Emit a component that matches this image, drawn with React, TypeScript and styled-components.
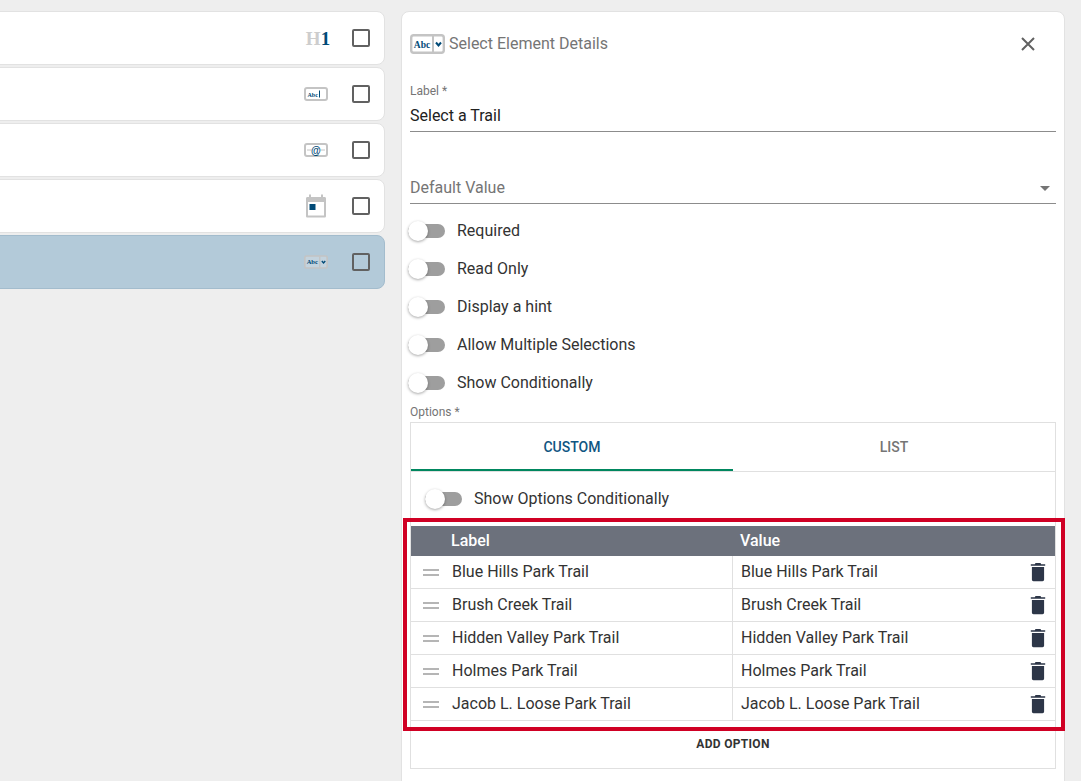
import React, { FC } from "react";
import styled, { createGlobalStyle } from "styled-components";

const GlobalStyle = createGlobalStyle`
  html, body {
    margin: 0;
    height: 781px;
    overflow: hidden;
    background: #eeeeee;
    font-family: Roboto, "Liberation Sans", sans-serif;
    color: #212121;
  }
  * { box-sizing: border-box; }
`;

const Page = styled.div`
  display: flex;
  align-items: flex-start;
  gap: 16px;
  height: 781px;
  padding-top: 11px;
  overflow: hidden;
`;

const ElementList = styled.div`
  display: flex;
  flex-direction: column;
  gap: 2px;
  width: 385px;
  flex: none;
`;

const ElementRow = styled.div<{ $active?: boolean }>`
  display: flex;
  align-items: center;
  justify-content: flex-end;
  height: 54px;
  margin-left: -12px;
  padding-right: 14px;
  border: 1px solid ${({ $active }) => ($active ? "#a3bccd" : "#e2e2e2")};
  border-radius: 8px;
  background: ${({ $active }) => ($active ? "#b3cad9" : "#fff")};
`;

const ElementIcon = styled.div`
  display: flex;
  align-items: center;
  justify-content: center;
  width: 26px;
  margin-right: 23px;
`;

const Checkbox = styled.span`
  width: 18px;
  height: 18px;
  border: 2px solid #616161;
  border-radius: 2px;
`;

const HeadingGlyph = styled.span`
  padding-left: 4px;
  font-family: "Liberation Serif", serif;
  font-weight: 700;
  font-size: 19px;
  line-height: 1;
  color: #cdcdcd;

  b {
    color: #004a77;
  }
`;

const Panel = styled.div`
  flex: none;
  width: 664px;
  height: 790px;
  padding: 0 8px;
  border: 1px solid #e2e2e2;
  border-radius: 8px;
  background: #fff;
`;

const PanelHeader = styled.div`
  display: flex;
  align-items: center;
  height: 63px;
`;

const PanelTitle = styled.h2`
  margin: 0 0 0 4px;
  flex: 1;
  font-size: 16px;
  font-weight: 400;
  color: #757575;
`;

const CloseButton = styled.span`
  display: flex;
  margin-right: 19px;
`;

const Field = styled.div<{ $height: number }>`
  position: relative;
  display: flex;
  flex-direction: column;
  justify-content: flex-end;
  height: ${({ $height }) => $height}px;
  padding-bottom: 6px;
  border-bottom: 1px solid #8c8c8c;
  font-size: 16px;
  line-height: 19px;
`;

const FieldLabel = styled.label`
  font-size: 12px;
  line-height: 14px;
  margin-bottom: 8px;
  color: #757575;
`;

const Placeholder = styled.span`
  color: #757575;
`;

const Caret = styled.span`
  position: absolute;
  right: 6px;
  bottom: 12px;
  border-left: 5px solid transparent;
  border-right: 5px solid transparent;
  border-top: 5px solid #757575;
`;

const Toggles = styled.div`
  display: flex;
  flex-direction: column;
  margin-top: 7px;
`;

const ToggleRow = styled.div<{ $indent?: boolean }>`
  display: flex;
  align-items: center;
  height: 38px;
  padding-left: ${({ $indent }) => ($indent ? "16px" : "0")};
  margin-left: -2px;
  font-size: 16px;
  color: #333;
`;

const Track = styled.span`
  position: relative;
  width: 37px;
  height: 14px;
  margin-top: 2px;
  margin-right: 12px;
  border-radius: 7px;
  background: #9e9e9e;

  &::before {
    content: "";
    position: absolute;
    left: 0;
    top: -3px;
    width: 20px;
    height: 20px;
    border-radius: 50%;
    background: #fff;
    box-shadow: 0 1px 3px rgba(0, 0, 0, 0.35);
  }
`;

const OptionsLabel = styled.div`
  font-size: 12px;
  line-height: 14px;
  margin-top: 4px;
  margin-bottom: 3px;
  color: #757575;
`;

const OptionsBox = styled.div`
  height: 347px;
  border: 1px solid #e0e0e0;
`;

const Tabs = styled.div`
  display: flex;
  height: 49px;
  border-bottom: 1px solid #e0e0e0;
`;

const Tab = styled.div<{ $active?: boolean }>`
  display: flex;
  align-items: center;
  justify-content: center;
  width: 50%;
  height: 48px;
  padding-top: 2px;
  font-size: 14px;
  font-weight: 500;
  color: ${({ $active }) => ($active ? "#0f5582" : "#757575")};
  border-bottom: 2px solid ${({ $active }) => ($active ? "#00875f" : "transparent")};
`;

const ConditionalRow = styled.div`
  display: flex;
  align-items: center;
  height: 54px;
  padding-bottom: 2px;
`;

const TableWrap = styled.div`
  position: relative;

  &::after {
    content: "";
    position: absolute;
    inset: -8px -10px -10px -8px;
    border: 4px solid #d00024;
    pointer-events: none;
  }
`;

const Grid = styled.div`
  display: grid;
  grid-template-columns: 322px 1fr;
`;

const HeaderCell = styled.div<{ $first?: boolean }>`
  height: 30px;
  padding-left: ${({ $first }) => ($first ? "40px" : "7px")};
  background: #6c717c;
  color: #fff;
  font-size: 16px;
  font-weight: 500;
  line-height: 29px;
`;

const Cell = styled.div<{ $first?: boolean }>`
  display: flex;
  align-items: center;
  height: 33px;
  padding-left: ${({ $first }) => ($first ? "12px" : "8px")};
  padding-right: 9px;
  padding-bottom: 2px;
  border-bottom: 1px solid #e0e0e0;
  border-right: ${({ $first }) => ($first ? "1px solid #e0e0e0" : "0")};
  font-size: 16px;
  color: #333;
`;

const DragHandle = styled.span`
  flex: none;
  width: 16px;
  height: 7px;
  margin-right: 13px;
  margin-top: 2px;
  border-top: 2px solid #b5b5b5;
  border-bottom: 2px solid #b5b5b5;
`;

const CellText = styled.span`
  flex: 1;
`;

const TrashSvg = styled.svg`
  margin-top: 2px;
`;

const AddOption = styled.div`
  margin-top: 1px;
  text-align: center;
  font-size: 12px;
  font-weight: 700;
  letter-spacing: 0.3px;
  line-height: 44px;
  color: #333;
`;

const TrashIcon: FC = () => (
  <TrashSvg width="16" height="20" viewBox="0 0 16 20">
    <path
      fill="#2d3648"
      d="M5.5 1h5l.7 1.2H15.2V3.8H.8V2.2H4.8L5.5 1ZM1.9 5H14.1V17.6C14.1 18.6 13.4 19.2 12.5 19.2H3.5C2.6 19.2 1.9 18.6 1.9 17.6V5Z"
    />
  </TrashSvg>
);

const CloseIcon: FC = () => (
  <svg width="18" height="18" viewBox="0 0 18 18">
    <path d="M3 3l12 12M15 3L3 15" stroke="#616161" strokeWidth="2" fill="none" />
  </svg>
);

const SelectGlyph: FC<{ large?: boolean; plain?: boolean }> = ({ large, plain }) => (
  <svg width={large ? 35 : 24} height={large ? 20 : 14} viewBox="0 0 35 20">
    <rect x="1.2" y="1.2" width="32.6" height="17.6" rx="2.5" fill={plain ? "#c3d3de" : "#fff"} stroke="#c4c4c4" strokeWidth="2.4" />
    <line x1="23" y1="2" x2="23" y2="18" stroke="#c4c4c4" strokeWidth="2" />
    <text x="12" y="13.5" textAnchor="middle" fontFamily="Liberation Serif, serif" fontWeight="700" fontSize="9.5" fill="#004a77">
      Abc
    </text>
    <path d="M26 8.5l2.5 3 2.5-3" stroke="#004a77" strokeWidth="2" fill="none" />
  </svg>
);

const InputGlyph: FC = () => (
  <svg width="24" height="14" viewBox="0 0 24 14">
    <rect x="1" y="1" width="22" height="12" rx="2" fill="#fff" stroke="#c4c4c4" strokeWidth="2" />
    <text x="3.5" y="9.5" fontFamily="Liberation Serif, serif" fontWeight="700" fontSize="6" fill="#004a77">
      Abc
    </text>
    <line x1="15.5" y1="3.5" x2="15.5" y2="10.5" stroke="#004a77" />
  </svg>
);

const EmailGlyph: FC = () => (
  <svg width="24" height="14" viewBox="0 0 24 14">
    <rect x="1" y="1" width="22" height="12" rx="2" fill="#fff" stroke="#c4c4c4" strokeWidth="2" />
    <line x1="3" y1="7" x2="21" y2="7" stroke="#c4c4c4" />
    <circle cx="12" cy="7" r="4.5" fill="#fff" />
    <text x="12" y="10.5" textAnchor="middle" fontFamily="Liberation Sans, sans-serif" fontWeight="700" fontSize="10" fill="#004a77">
      @
    </text>
  </svg>
);

const DateGlyph: FC = () => (
  <svg width="22" height="24" viewBox="0 0 22 24">
    <path d="M4 0.5h2V3h10V0.5h2V3h1.5C20.5 3 21 3.6 21 4.5V22c0 1-.6 1.5-1.5 1.5h-17C1.5 23.5 1 23 1 22V4.5C1 3.6 1.5 3 2.5 3H4Z" fill="#c4c4c4" />
    <rect x="3" y="8" width="16" height="13.5" fill="#fff" />
    <rect x="4.5" y="10" width="6" height="6" fill="#004a77" />
  </svg>
);

const rows = [
  "Blue Hills Park Trail",
  "Brush Creek Trail",
  "Hidden Valley Park Trail",
  "Holmes Park Trail",
  "Jacob L. Loose Park Trail",
];

const toggles = ["Required", "Read Only", "Display a hint", "Allow Multiple Selections", "Show Conditionally"];

const App: FC = () => (
  <Page>
    <GlobalStyle />
    <ElementList>
      <ElementRow>
        <ElementIcon>
          <HeadingGlyph>
            H<b>1</b>
          </HeadingGlyph>
        </ElementIcon>
        <Checkbox />
      </ElementRow>
      <ElementRow>
        <ElementIcon>
          <InputGlyph />
        </ElementIcon>
        <Checkbox />
      </ElementRow>
      <ElementRow>
        <ElementIcon>
          <EmailGlyph />
        </ElementIcon>
        <Checkbox />
      </ElementRow>
      <ElementRow>
        <ElementIcon>
          <DateGlyph />
        </ElementIcon>
        <Checkbox />
      </ElementRow>
      <ElementRow $active>
        <ElementIcon>
          <SelectGlyph plain />
        </ElementIcon>
        <Checkbox />
      </ElementRow>
    </ElementList>

    <Panel>
      <PanelHeader>
        <SelectGlyph large />
        <PanelTitle>Select Element Details</PanelTitle>
        <CloseButton>
          <CloseIcon />
        </CloseButton>
      </PanelHeader>

      <Field $height={57}>
        <FieldLabel>Label *</FieldLabel>
        Select a Trail
      </Field>
      <Field $height={72}>
        <Placeholder>Default Value</Placeholder>
        <Caret />
      </Field>

      <Toggles>
        {toggles.map((t) => (
          <ToggleRow key={t}>
            <Track />
            {t}
          </ToggleRow>
        ))}
      </Toggles>

      <OptionsLabel>Options *</OptionsLabel>
      <OptionsBox>
        <Tabs>
          <Tab $active>CUSTOM</Tab>
          <Tab>LIST</Tab>
        </Tabs>
        <ConditionalRow>
          <ToggleRow $indent>
            <Track />
            Show Options Conditionally
          </ToggleRow>
        </ConditionalRow>
        <TableWrap>
          <Grid>
            <HeaderCell $first>Label</HeaderCell>
            <HeaderCell>Value</HeaderCell>
            {rows.map((r) => (
              <React.Fragment key={r}>
                <Cell $first>
                  <DragHandle />
                  <CellText>{r}</CellText>
                </Cell>
                <Cell>
                  <CellText>{r}</CellText>
                  <TrashIcon />
                </Cell>
              </React.Fragment>
            ))}
          </Grid>
        </TableWrap>
        <AddOption>ADD OPTION</AddOption>
      </OptionsBox>
    </Panel>
  </Page>
);

export default App;
